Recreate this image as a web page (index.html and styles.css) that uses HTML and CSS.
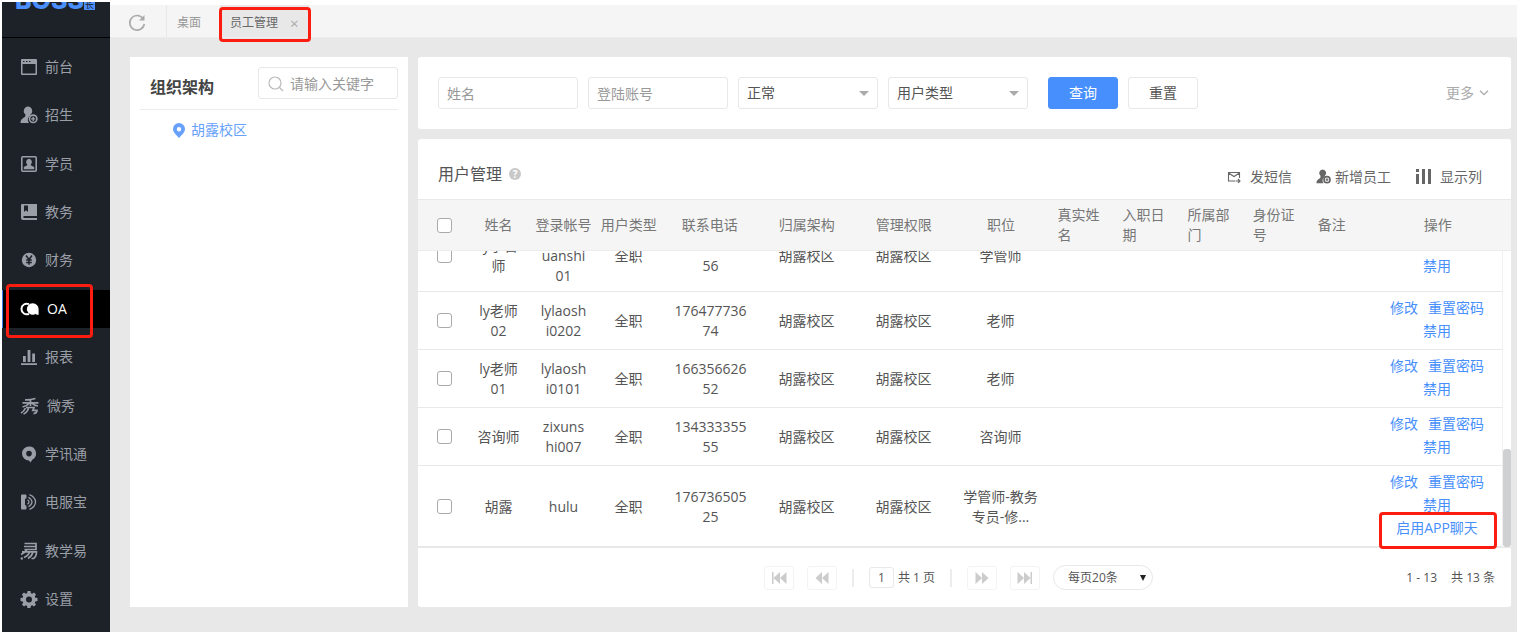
FILE: index.html
```html
<!DOCTYPE html>
<html lang="zh-CN">
<head>
<meta charset="utf-8"/>
<title>员工管理</title>
<meta content="width=device-width, initial-scale=1.0" name="viewport"/>
<link rel="stylesheet" href="styles.css">
</head>
<body>
<div class="app">
  <aside class="sidebar">
    <div class="logo"><span class="logo-text">BOSS</span><span class="logo-tag">校长</span></div>
    <nav class="menu">
      <a href="#"><svg viewBox="0 0 18 18"><path fill-rule="evenodd" d="M2 1h14a1 1 0 0 1 1 1v14a1 1 0 0 1-1 1H2a1 1 0 0 1-1-1V2a1 1 0 0 1 1-1zm.5 5v9.500h13V6zM3 3v1h1.500V3zm3 0v1h1.500V3zm3 0v1h1.500V3z"/></svg>前台</a>
      <a href="#"><svg viewBox="0 0 18 18"><path d="M8 .5a4.500 4.500 0 0 1 2.500 8l-.2 1A5 5 0 0 0 9 17H.5c.1-3.500 2-4.600 4.600-6.200l.4-2.300A4.500 4.500 0 0 1 8 .5z"/><circle cx="13.200" cy="12.800" r="3.700" fill="none" stroke="currentColor" stroke-width="1.600"/><path d="M12.500 10.800h1.400v1.400h1.400v1.300h-1.400v1.400h-1.400v-1.400h-1.400v-1.300h1.400z"/></svg>招生</a>
      <a href="#"><svg viewBox="0 0 18 18"><rect x="1.800" y="1.800" width="14.400" height="14.400" rx="1" fill="none" stroke="currentColor" stroke-width="1.600"/><path d="M9 3.800a3.200 3.200 0 0 1 1.800 5.600v.9l3.400 1.700v2.200H3.800V12l3.400-1.700v-.9A3.200 3.200 0 0 1 9 3.800z"/></svg>学员</a>
      <a href="#"><svg viewBox="0 0 18 18"><path fill-rule="evenodd" d="M2 1h15v12H3.500v2H17v2H3a2 2 0 0 1-2-2V2a1 1 0 0 1 1-1zm2 1.500V9l2-1.800L8 9V2.500z"/></svg>教务</a>
      <a href="#"><svg viewBox="0 0 18 18"><circle cx="9" cy="9" r="7.200"/><path d="M6 4.500l3 4 3-4M9 8.500v5.300M6.200 9h5.600M6.200 11.400h5.600" fill="none" stroke="#1d2228" stroke-width="1.500"/></svg>财务</a>
      <a href="#" class="active"><svg class="wide" viewBox="0 0 20 18"><path d="M9 4.200A5.300 5.300 0 1 0 9 13.800" fill="none" stroke="currentColor" stroke-width="2"/><path d="M12.800 3.200a5.800 5.800 0 0 1 5.800 5.800v5.800h-2.200l-.3-1.100A5.800 5.800 0 1 1 12.800 3.200z"/></svg>OA<span class="mark mark-menu"></span></a>
      <a href="#"><svg viewBox="0 0 18 18"><path d="M3 8h2.800v6H3zM7.600 2h2.800v12H7.600zM12.200 5.500H15V14h-2.800zM1 15.200h16V17H1z"/></svg>报表</a>
      <a href="#"><svg class="wide" viewBox="0 0 20 18"><path d="M5 2.800Q10 3 15.500 1.500M2.500 5.800H18.500M10.500 2.500V9M9.500 6Q7 9 2.500 10M11.500 6Q14 8.500 18 9M6 10.500h8l-1.200 2.800h4.200q0 3-3.500 3.400M8.500 10.500Q8 15 3.500 17M5.500 11Q4 14.500 1 16" fill="none" stroke="currentColor" stroke-width="1.700"/></svg>微秀</a>
      <a href="#"><svg viewBox="0 0 18 18"><path fill-rule="evenodd" d="M9 1.500a7 7 0 0 1 3.300 13.200L10.500 17.500l-1.500-2A7 7 0 0 1 9 1.500zm0 4.300a2.800 2.800 0 1 0 0 5.600 2.800 2.800 0 0 0 0-5.600z"/></svg>学讯通</a>
      <a href="#"><svg viewBox="0 0 18 18"><path d="M2 1.500h3.500q1 0 1 1v2.300q0 1-1 1H5v6.400h.5q1 0 1 1v2.300q0 1-1 1H2q-1 0-1-1v-13q0-1 1-1z"/><path d="M7.500 6.800q3 2.200 0 4.400M8.500 4.200q7 4.800 0 9.600M9.500 1.600c8 3.500 8 11.300 0 14.800" fill="none" stroke="currentColor" stroke-width="1.300"/></svg>电服宝</a>
      <a href="#"><svg viewBox="0 0 18 18"><path d="M4.500 1.500h11.500v6H4.500M4 4.500h12M2 9.800h14.500q0 5-3 6.700h-2M6.500 8q-1.500 3-5.500 4.500M9.500 10q-1 3.500-5.500 5.500M13 10q-1 4-5 6.500" fill="none" stroke="currentColor" stroke-width="1.700"/><circle cx="1.800" cy="16.500" r="1.200"/></svg>教学易</a>
      <a href="#"><svg viewBox="0 0 18 18"><path fill-rule="evenodd" d="M7.500 1h3l.4 2.200 1.300.6L14 2.500 16 4.600l-1.200 1.800.5 1.300 2.200.4v2.900l-2.200.4-.5 1.300 1.200 1.800-2 2.100-1.900-1.300-1.300.6-.4 2.100h-3l-.3-2.100-1.300-.6L4 16.600l-2.100-2.100 1.300-1.800-.6-1.300-2.100-.4V8.100l2.100-.4.600-1.300-1.300-1.800L4 2.500l1.800 1.300 1.300-.6zM9 6.600a3 3 0 1 0 0 6 3 3 0 0 0 0-6z"/></svg>设置</a>
    </nav>
  </aside>

  <div class="main">
    <header class="tabs">
      <button class="refresh" aria-label="刷新"><svg viewBox="0 0 18 18"><path d="M15 4.500A7.300 7.300 0 1 0 16.300 10" fill="none" stroke="currentColor" stroke-width="1.600"/><path d="M16.500 1v5.500H11z"/></svg></button>
      <a href="#" class="tab">桌面</a>
      <a href="#" class="tab current">员工管理<span class="close">×</span><span class="mark mark-tab"></span></a>
    </header>

    <div class="content">
      <section class="org">
        <div class="org-head">
          <h2>组织架构</h2>
          <label class="search">
            <svg viewBox="0 0 16 16"><circle cx="7" cy="7" r="6" fill="none" stroke="currentColor" stroke-width="1.200"/><path d="M11.500 11.500l3.500 3.500" stroke="currentColor" stroke-width="1.200"/></svg>
            <input type="text" placeholder="请输入关键字" aria-label="关键字">
          </label>
        </div>
        <a href="#" class="campus"><svg viewBox="0 0 12 15"><path fill-rule="evenodd" d="M6 0a6 6 0 0 1 6 6c0 3.500-3.500 6-6 9-2.500-3-6-5.500-6-9a6 6 0 0 1 6-6zm0 4a2.200 2.200 0 1 0 0 4.400A2.200 2.200 0 0 0 6 4z"/></svg>胡露校区</a>
      </section>

      <div class="right">
        <form class="card filter">
          <input class="field" type="text" placeholder="姓名" aria-label="姓名">
          <input class="field" type="text" placeholder="登陆账号" aria-label="登陆账号">
          <span class="select"><select class="field" aria-label="状态"><option>正常</option></select></span>
          <span class="select"><select class="field" aria-label="用户类型"><option>用户类型</option></select></span>
          <button type="button" class="btn primary">查询</button>
          <button type="button" class="btn">重置</button>
          <a href="#" class="more">更多<svg viewBox="0 0 10 6"><path d="M1 .7l4 4 4-4" fill="none" stroke="currentColor" stroke-width="1.300"/></svg></a>
        </form>

        <section class="card users">
          <div class="users-head">
            <h3>用户管理</h3>
            <span class="help">?</span>
            <div class="tools">
              <a href="#"><svg class="mail" viewBox="0 0 14 12"><path d="M8 10H1.500V1.500h11V7M1.500 2L7 5.500 12.500 2M8.500 10h4M11 8l2 2-2 2" fill="none" stroke="currentColor" stroke-width="1.100"/></svg>发短信</a>
              <a href="#"><svg class="person" viewBox="0 0 18 18"><path d="M8 .5a4.500 4.500 0 0 1 2.500 8l-.2 1A5 5 0 0 0 9 17H.5c.1-3.500 2-4.600 4.600-6.200l.4-2.300A4.500 4.500 0 0 1 8 .5z"/><circle cx="13.200" cy="12.800" r="3.600" fill="none" stroke="currentColor" stroke-width="2"/><path d="M12.500 11.200h1.400v1h1v1.300h-1v1h-1.400v-1h-1v-1.300h1z"/></svg>新增员工</a>
              <a href="#"><svg class="cols" viewBox="0 0 17 15"><path d="M1 0h3v3H1zM1 5h3v10H1zM7 0h3v15H7zM13 0h3v15h-3z"/></svg>显示列</a>
            </div>
          </div>

          <div class="grid-head">
            <table>
              <colgroup><col class="c-check"><col class="c-s"><col class="c-s"><col class="c-s"><col class="c-l"><col class="c-l"><col class="c-l"><col class="c-l"><col class="c-s"><col class="c-s"><col class="c-s"><col class="c-s"><col class="c-s"><col class="c-act"></colgroup>
              <thead>
                <tr>
                  <th class="check"><input type="checkbox" aria-label="全选"></th>
                  <th>姓名</th><th class="tight">登录帐号</th><th class="tight">用户类型</th><th>联系电话</th><th>归属架构</th><th>管理权限</th><th>职位</th>
                  <th class="left">真实姓名</th><th class="left">入职日期</th><th class="left">所属部门</th><th class="left">身份证号</th><th class="left">备注</th><th class="ops">操作</th>
                </tr>
              </thead>
            </table>
          </div>

          <div class="grid-body">
            <div class="rows">
              <table>
                <colgroup><col class="c-check"><col class="c-s"><col class="c-s"><col class="c-s"><col class="c-l"><col class="c-l"><col class="c-l"><col class="c-l"><col class="c-s"><col class="c-s"><col class="c-s"><col class="c-s"><col class="c-s"><col class="c-act"></colgroup>
                <tbody>
                  <tr>
                    <td class="check"><input type="checkbox" aria-label="ly学管师"></td>
                    <td>ly学管师</td><td>lyxueg<wbr>uanshi<wbr>01</td><td>全职</td><td class="phone">15675465456</td><td>胡露校区</td><td>胡露校区</td><td>学管师</td>
                    <td></td><td></td><td></td><td></td><td></td>
                    <td class="act"><a href="#">修改</a><a href="#">重置密码</a><br><a href="#">禁用</a></td>
                  </tr>
                  <tr>
                    <td class="check"><input type="checkbox" aria-label="ly老师02"></td>
                    <td>ly老师02</td><td>lylaosh<wbr>i0202</td><td>全职</td><td class="phone">17647773674</td><td>胡露校区</td><td>胡露校区</td><td>老师</td>
                    <td></td><td></td><td></td><td></td><td></td>
                    <td class="act"><a href="#">修改</a><a href="#">重置密码</a><br><a href="#">禁用</a></td>
                  </tr>
                  <tr>
                    <td class="check"><input type="checkbox" aria-label="ly老师01"></td>
                    <td>ly老师01</td><td>lylaosh<wbr>i0101</td><td>全职</td><td class="phone">16635662652</td><td>胡露校区</td><td>胡露校区</td><td>老师</td>
                    <td></td><td></td><td></td><td></td><td></td>
                    <td class="act"><a href="#">修改</a><a href="#">重置密码</a><br><a href="#">禁用</a></td>
                  </tr>
                  <tr>
                    <td class="check"><input type="checkbox" aria-label="咨询师"></td>
                    <td>咨询师</td><td>zixuns<wbr>hi007</td><td>全职</td><td class="phone">13433335555</td><td>胡露校区</td><td>胡露校区</td><td>咨询师</td>
                    <td></td><td></td><td></td><td></td><td></td>
                    <td class="act"><a href="#">修改</a><a href="#">重置密码</a><br><a href="#">禁用</a></td>
                  </tr>
                  <tr>
                    <td class="check"><input type="checkbox" aria-label="胡露"></td>
                    <td>胡露</td><td>hulu</td><td>全职</td><td class="phone">17673650525</td><td>胡露校区</td><td>胡露校区</td><td>学管师-教务专员-修...</td>
                    <td></td><td></td><td></td><td></td><td></td>
                    <td class="act"><a href="#">修改</a><a href="#">重置密码</a><br><a href="#">禁用</a><br><a href="#">启用APP聊天</a></td>
                  </tr>
                </tbody>
              </table>
            </div>
            <div class="track"><div class="thumb"></div></div>
            <span class="mark mark-chat"></span>
          </div>

          <footer class="pager">
            <div class="pages">
              <button aria-label="首页"><svg viewBox="0 0 16 12"><path d="M1 0h1.500v12H1zM9 0v12L2.500 6zM15.500 0v12L9 6z"/></svg></button>
              <button aria-label="上一页"><svg viewBox="0 0 16 12"><path d="M8 0v12L1.500 6zM14.500 0v12L8 6z"/></svg></button>
              <i class="sep"></i>
              <label class="page-no"><input type="text" value="1" aria-label="页码">共 1 页</label>
              <i class="sep"></i>
              <button aria-label="下一页"><svg viewBox="0 0 16 12"><path d="M1.500 0v12L8 6zM8 0v12l6.500-6z"/></svg></button>
              <button aria-label="末页"><svg viewBox="0 0 16 12"><path d="M.5 0v12L7 6zM7 0v12l6.500-6zM13.500 0H15v12h-1.500z"/></svg></button>
              <span class="select size"><select aria-label="每页条数"><option>每页20条</option></select></span>
            </div>
            <div class="total"><span>1 - 13</span><span>共 13 条</span></div>
          </footer>
        </section>
      </div>
    </div>
  </div>
</div>
</body>
</html>
```
FILE: styles.css
```css
* { box-sizing: border-box; }
body {
  margin: 0;
  padding: 2px;
  height: 100vh;
  background: #fff;
  color: #555;
  font: 14px/20px "Open Sans", "Noto Sans CJK SC", sans-serif;
}
a { color: inherit; text-decoration: none; }
h2, h3 { margin: 0; font-size: 16px; line-height: 24px; }
svg { fill: currentColor; flex: none; }
input, select, button {
  font: inherit;
  color: inherit;
  margin: 0;
  background: #fff;
}
button { cursor: pointer; padding: 0; }
input::placeholder { color: #999; opacity: 1; }

.app { display: flex; height: 100%; }

/* sidebar */
.sidebar {
  width: 108px;
  flex: none;
  background: #1d2228;
  color: #9a9ea7;
  display: flex;
  flex-direction: column;
}
.logo {
  height: 36px;
  flex: none;
  border-bottom: 1px solid #000;
  overflow: hidden;
  display: flex;
  align-items: flex-start;
  padding-left: 13px;
}
.logo-text {
  font: 800 25px/24px Inter, sans-serif;
  color: #4a8ffb;
  margin-top: -14px;
}
.logo-tag {
  width: 11px;
  margin-top: -14px;
  background: #4a8ffb;
  color: #1d2228;
  font-size: 9px;
  line-height: 11px;
  text-align: center;
  word-break: break-all;
}
.menu {
  flex: 1;
  display: flex;
  flex-direction: column;
  justify-content: space-between;
  padding: 10px 0 14px;
}
.menu a {
  position: relative;
  display: flex;
  align-items: center;
  gap: 7px;
  height: 38px;
  padding-left: 18px;
}
.menu svg { width: 18px; height: 18px; }
.menu svg.wide { width: 20px; }
.menu .active {
  background: #000;
  color: #fff;
  box-shadow: inset 1px 0 #3f7fe8;
}

/* red outlines */
.mark {
  position: absolute;
  border: 3px solid #fc1d10;
  border-radius: 4px;
  pointer-events: none;
}
.mark-menu { left: 4px; right: 17px; top: -6px; bottom: -10px; }
.mark-tab { left: -1px; right: -2px; top: 2px; bottom: -5px; }
.mark-chat { right: 14px; bottom: -2px; width: 118px; height: 37px; }

.main {
  flex: 1;
  min-width: 0;
  display: flex;
  flex-direction: column;
  background: #e8e8e8;
}
.tabs {
  display: flex;
  height: 36px;
  flex: none;
  background: #f5f5f5;
  border-top: 3px solid #fff;
  border-bottom: 1px solid #ececec;
  font-size: 12px;
}
.refresh {
  width: 57px;
  padding: 3px 3px 0 0;
  border: 0;
  border-right: 1px solid #e8e8e8;
  background: none;
  color: #aaa;
}
.refresh svg { width: 18px; height: 18px; vertical-align: middle; }
.tab {
  position: relative;
  display: flex;
  align-items: center;
  padding: 4px 10px 0;
  color: #999;
}
.tab.current { margin-left: 9px; background: #e8e8e8; color: #666; }
.close { margin-left: 12px; font-size: 15px; color: #aaa; }

.content {
  flex: 1;
  min-height: 0;
  display: flex;
  gap: 10px;
  padding: 19px 6px 25px 20px;
}

/* organisation tree */
.org { width: 278px; flex: none; background: #fff; }
.org-head {
  display: flex;
  align-items: center;
  justify-content: space-between;
  margin: 0 10px;
  padding: 10px 0 10px 10px;
  border-bottom: 1px solid #ececec;
}
.org-head h2 { color: #444; padding-top: 8px; }
.search {
  display: flex;
  align-items: center;
  gap: 6px;
  width: 140px;
  height: 32px;
  padding: 2px 9px 0;
  border: 1px solid #e8e8e8;
  border-radius: 3px;
  color: #bbb;
}
.search svg { width: 16px; height: 16px; }
.search input { width: 100%; min-width: 0; border: 0; padding: 0; outline: 0; }
.campus {
  display: flex;
  align-items: center;
  gap: 6px;
  padding: 10px 43px;
  color: #67a1fb;
}
.campus svg { width: 12px; height: 15px; }

.right {
  flex: 1;
  min-width: 0;
  display: flex;
  flex-direction: column;
  gap: 10px;
}
.card { background: #fff; border-radius: 3px; }

/* filter bar */
.filter {
  display: flex;
  align-items: center;
  gap: 10px;
  padding: 20px;
}
.field {
  width: 140px;
  height: 32px;
  padding: 0 8px;
  border: 1px solid #e8e8e8;
  border-radius: 3px;
}
.select { position: relative; display: inline-flex; }
.select select { appearance: none; }
.select::after {
  content: "";
  position: absolute;
  right: 9px;
  top: 14px;
  border: 5px solid transparent;
  border-top-color: #aaa;
  border-bottom: 0;
  pointer-events: none;
}
.btn {
  width: 70px;
  height: 32px;
  border: 1px solid #e8e8e8;
  border-radius: 3px;
}
.primary {
  margin-left: 10px;
  background: #478ffc;
  border-color: #478ffc;
  color: #fff;
}
.more {
  margin-left: auto;
  margin-right: 2px;
  display: flex;
  align-items: center;
  gap: 5px;
  color: #aaa;
}
.more svg { width: 10px; height: 6px; }

/* user list */
.users {
  flex: 1;
  min-height: 0;
  display: flex;
  flex-direction: column;
}
.users-head {
  display: flex;
  align-items: center;
  height: 60px;
  flex: none;
  padding: 9px 29px 0 20px;
}
.users-head h3 { font-weight: normal; }
.help {
  width: 12px;
  height: 12px;
  margin-left: 7px;
  border-radius: 50%;
  background: #c8c8c8;
  color: #fff;
  font-size: 10px;
  font-weight: bold;
  line-height: 12px;
  text-align: center;
}
.tools {
  display: flex;
  gap: 24px;
  margin-left: auto;
  padding-top: 6px;
  color: #666;
}
.tools a { display: flex; align-items: center; gap: 4px; }
.mail { width: 14px; height: 12px; margin-right: 5px; }
.person { width: 15px; height: 15px; }
.cols { width: 17px; height: 15px; margin-right: 4px; }

table {
  width: 100%;
  border-collapse: separate;
  border-spacing: 0;
  table-layout: fixed;
}
.c-check { width: 48px; }
.c-s { width: 65px; }
.c-l { width: 97px; }
.c-act { width: 128px; }
th, td {
  padding: 5px 8px;
  text-align: center;
  overflow-wrap: break-word;
}
th { height: 50px; font-weight: normal; color: #777; }
th.left { text-align: left; }
th.tight { padding: 0; white-space: nowrap; }
th.ops { padding: 0 2px 0 0; }
.check { padding: 0 0 0 19px; text-align: left; }
input[type=checkbox] {
  appearance: none;
  display: block;
  width: 15px;
  height: 15px;
  border: 1px solid #aaa;
  border-radius: 3px;
}
input[type=checkbox]:checked { background: #478ffc; }

.grid-head {
  flex: none;
  padding-right: 8px;
  background: #f5f5f5;
  border-top: 1px solid #e8e8e8;
  border-bottom: 1px solid #ececec;
}
.grid-body {
  position: relative;
  flex: 1;
  min-height: 0;
  display: flex;
}
/* the list stands at its last row */
.rows {
  flex: 1;
  min-width: 0;
  display: flex;
  flex-direction: column;
  justify-content: flex-end;
  overflow: hidden;
}
td { height: 58px; border-bottom: 1px solid #e8e8e8; padding: 6px 8px 5px; }
td.check { padding: 0 0 0 19px; }
td.phone { padding: 6px 10px 5px 12px; }
td.act { padding: 4px 2px 7px 0; line-height: 23px; color: #478ffc; }
.act a + a { margin-left: 10px; }
.act br + a { margin-left: 0; }
.track {
  width: 9px;
  display: flex;
  align-items: flex-end;
  border-left: 1px solid #f0f0f0;
}
.thumb { width: 8px; height: 33%; border-radius: 3px; background: #cfd0d2; }

.pager {
  height: 60px;
  flex: none;
  display: grid;
  grid-template-columns: 1fr auto 1fr;
  align-items: center;
  padding: 0 16px 0 4px;
  border-top: 1px solid #e8e8e8;
  font-size: 12px;
}
.pages { grid-column: 2; display: flex; align-items: center; gap: 13px; }
.pages button {
  width: 30px;
  height: 24px;
  border: 1px solid #f3f3f3;
  border-radius: 3px;
  color: #ccc;
}
.pages button svg { width: 16px; height: 12px; vertical-align: middle; }
.sep { width: 2px; height: 18px; margin: 0 2px; background: #ececec; }
.page-no { display: flex; align-items: center; gap: 4px; }
.page-no input {
  width: 25px;
  height: 21px;
  padding: 0;
  border: 1px solid #e8e8e8;
  border-radius: 3px;
  text-align: center;
}
.size select {
  width: 100px;
  height: 25px;
  padding: 0 14px;
  border: 1px solid #e8e8e8;
  border-radius: 13px;
}
.size::after { right: 7px; top: 10px; border-width: 6px 3px 0; border-top-color: #222; }
.total { display: flex; justify-content: flex-end; gap: 14px; }
```
